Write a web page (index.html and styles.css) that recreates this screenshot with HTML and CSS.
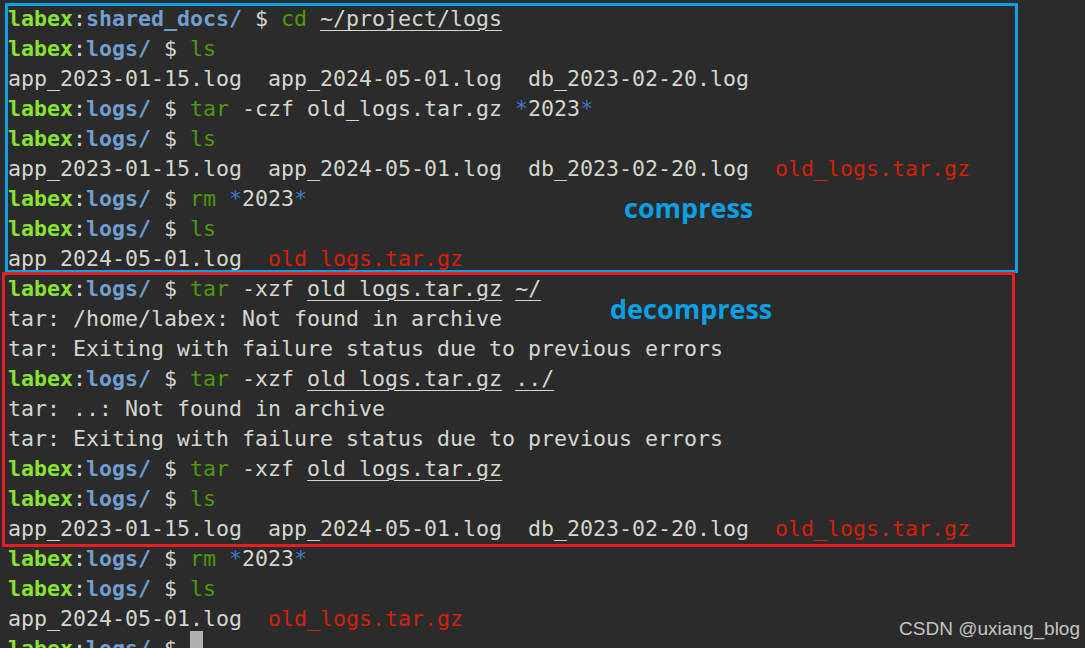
FILE: index.html
```html
<!DOCTYPE html>
<html>
<head>
<meta charset="utf-8">
<link rel="stylesheet" href="styles.css">
</head>
<body>
<div class="term">
<div class="ln"><span class="u">labex</span>:<span class="p">shared_docs/</span> $ <span class="c">cd</span> <span class="ul">~/project/logs</span></div>
<div class="ln"><span class="u">labex</span>:<span class="p">logs/</span> $ <span class="c">ls</span></div>
<div class="ln">app_2023-01-15.log  app_2024-05-01.log  db_2023-02-20.log</div>
<div class="ln"><span class="u">labex</span>:<span class="p">logs/</span> $ <span class="c">tar</span> -czf old_logs.tar.gz <span class="g">*</span>2023<span class="g">*</span></div>
<div class="ln"><span class="u">labex</span>:<span class="p">logs/</span> $ <span class="c">ls</span></div>
<div class="ln">app_2023-01-15.log  app_2024-05-01.log  db_2023-02-20.log  <span class="r">old_logs.tar.gz</span></div>
<div class="ln"><span class="u">labex</span>:<span class="p">logs/</span> $ <span class="c">rm</span> <span class="g">*</span>2023<span class="g">*</span></div>
<div class="ln"><span class="u">labex</span>:<span class="p">logs/</span> $ <span class="c">ls</span></div>
<div class="ln">app_2024-05-01.log  <span class="r">old_logs.tar.gz</span></div>
<div class="ln"><span class="u">labex</span>:<span class="p">logs/</span> $ <span class="c">tar</span> -xzf <span class="ul">old_logs.tar.gz</span> <span class="ul">~/</span></div>
<div class="ln">tar: /home/labex: Not found in archive</div>
<div class="ln">tar: Exiting with failure status due to previous errors</div>
<div class="ln"><span class="u">labex</span>:<span class="p">logs/</span> $ <span class="c">tar</span> -xzf <span class="ul">old_logs.tar.gz</span> <span class="ul">../</span></div>
<div class="ln">tar: ..: Not found in archive</div>
<div class="ln">tar: Exiting with failure status due to previous errors</div>
<div class="ln"><span class="u">labex</span>:<span class="p">logs/</span> $ <span class="c">tar</span> -xzf <span class="ul">old_logs.tar.gz</span></div>
<div class="ln"><span class="u">labex</span>:<span class="p">logs/</span> $ <span class="c">ls</span></div>
<div class="ln">app_2023-01-15.log  app_2024-05-01.log  db_2023-02-20.log  <span class="r">old_logs.tar.gz</span></div>
<div class="ln"><span class="u">labex</span>:<span class="p">logs/</span> $ <span class="c">rm</span> <span class="g">*</span>2023<span class="g">*</span></div>
<div class="ln"><span class="u">labex</span>:<span class="p">logs/</span> $ <span class="c">ls</span></div>
<div class="ln">app_2024-05-01.log  <span class="r">old_logs.tar.gz</span></div>
<div class="ln"><span class="u">labex</span>:<span class="p">logs/</span> $ <span class="cursor"> </span></div>
</div>
<div class="box box-blue"></div>
<div class="box box-red"></div>
<div class="note note-compress">compress</div>
<div class="note note-decompress">decompress</div>
<div class="mark">CSDN @uxiang_blog</div>
</body>
</html>
```
FILE: styles.css
```css
html, body {
  margin: 0;
  padding: 0;
  background: #2b2b2b;
  width: 1085px;
  height: 648px;
  overflow: hidden;
}
body {
  position: relative;
}
.term {
  padding: 4px 0 0 8px;
  font-family: "DejaVu Sans Mono", monospace;
  font-size: 21.6px;
  color: #d3d7cf;
}
.ln {
  height: 30px;
  line-height: 30px;
  white-space: pre;
}
.u {
  color: #8ae234;
  font-weight: bold;
}
.p {
  color: #729fcf;
  font-weight: bold;
}
.c {
  color: #4e9a06;
}
.g {
  color: #3e7cc6;
}
.r {
  color: #d4200c;
}
.ul {
  text-decoration: underline;
  text-underline-offset: 4px;
  text-decoration-thickness: 1px;
}
.cursor {
  display: inline-block;
  width: 13px;
  height: 30px;
  background: #b0b0b0;
  vertical-align: top;
  transform: translateY(-3px);
}
.box {
  position: absolute;
  box-sizing: border-box;
  border: 3px solid;
}
.box-blue {
  left: 5px;
  top: 3px;
  width: 1013px;
  height: 270px;
  border-color: #0d9fe3;
}
.box-red {
  left: 2px;
  top: 272px;
  width: 1013px;
  height: 275px;
  border-color: #e81e25;
}
.note {
  position: absolute;
  font-family: "Open Sans", "Noto Sans", sans-serif;
  font-weight: bold;
  font-size: 27px;
  color: #0aa0e4;
  line-height: 30px;
}
.note-compress {
  left: 624px;
  top: 193px;
}
.note-decompress {
  left: 610px;
  top: 294px;
}
.mark {
  position: absolute;
  right: 5px;
  top: 618px;
  font-family: "Liberation Sans", Arial, sans-serif;
  font-size: 19px;
  color: #c4c4c4;
}
```
